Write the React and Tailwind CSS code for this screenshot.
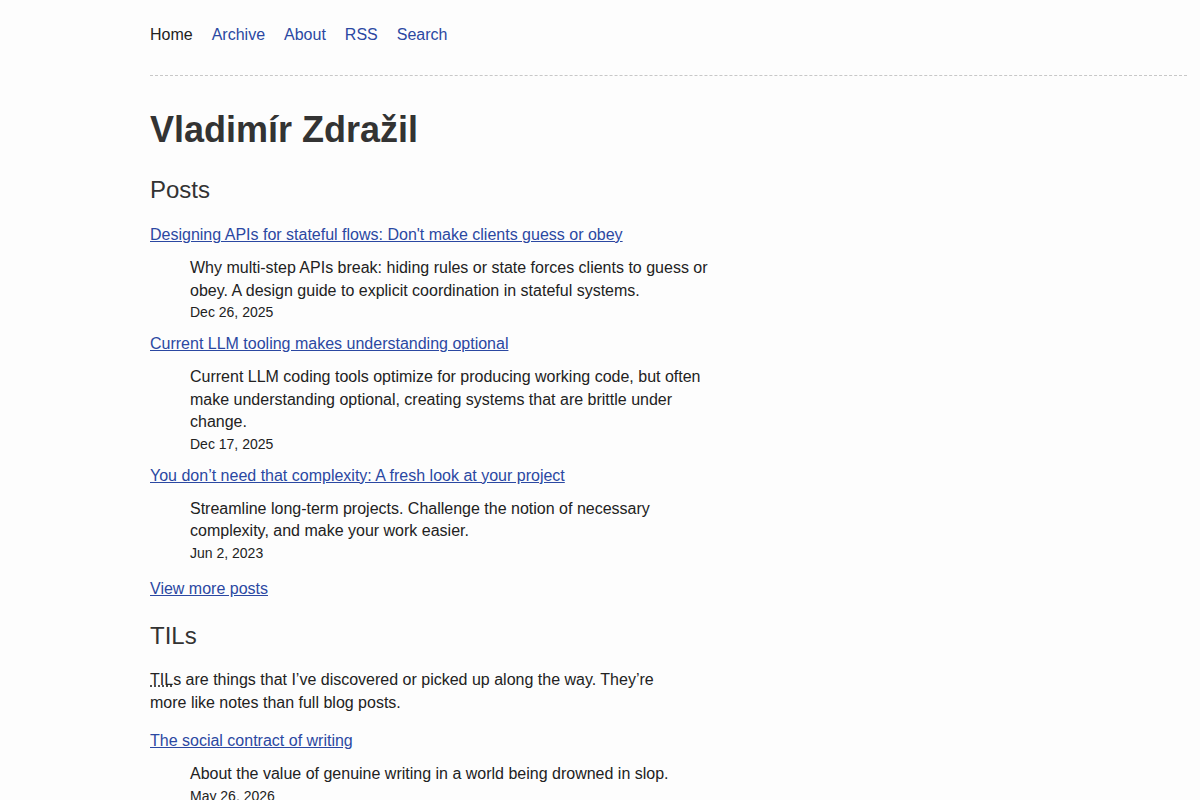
import React from "react";

const posts = [
  {
    title: "Designing APIs for stateful flows: Don't make clients guess or obey",
    desc: "Why multi-step APIs break: hiding rules or state forces clients to guess or obey. A design guide to explicit coordination in stateful systems.",
    date: "Dec 26, 2025",
  },
  {
    title: "Current LLM tooling makes understanding optional",
    desc: "Current LLM coding tools optimize for producing working code, but often make understanding optional, creating systems that are brittle under change.",
    date: "Dec 17, 2025",
  },
  {
    title: "You don\u2019t need that complexity: A fresh look at your project",
    desc: "Streamline long-term projects. Challenge the notion of necessary complexity, and make your work easier.",
    date: "Jun 2, 2023",
  },
];

const tils = [
  {
    title: "The social contract of writing",
    desc: "About the value of genuine writing in a world being drowned in slop.",
    date: "May 26, 2026",
  },
];

function Entry({ item, first }) {
  return (
    <li className={first ? "" : "mt-[10px]"}>
      <a href="#" className="text-[#2b48a2] underline text-[16px] leading-[24px]">
        {item.title}
      </a>
      <div className="pl-[40px] mt-[10px]">
        <p className="max-w-[530px] text-[16px] leading-[22.5px] text-[#222]">{item.desc}</p>
        <div className="text-[14px] leading-[20px] text-[#222]">{item.date}</div>
      </div>
    </li>
  );
}

export default function App() {
  return (
    <div
      className="min-h-[800px] bg-[#fdfdfd] text-[#222]"
      style={{ fontFamily: '"Liberation Sans", Arial, sans-serif' }}
    >
      <div className="ml-[150px] mr-[13px] pt-[23px]">
        <header className="border-b border-dashed border-[#c8c8c8] pb-[28px]">
          <nav className="flex gap-[19px] text-[16px] leading-[24px]">
            <a href="#" className="text-[#222]">Home</a>
            <a href="#" className="text-[#2b48a2]">Archive</a>
            <a href="#" className="text-[#2b48a2]">About</a>
            <a href="#" className="text-[#2b48a2]">RSS</a>
            <a href="#" className="text-[#2b48a2]">Search</a>
          </nav>
        </header>
        <main className="pt-[32px]">
          <h1 className="text-[36px] leading-[44px] font-bold text-[#333]">Vladimír Zdražil</h1>
          <h2 className="mt-[22px] text-[24px] leading-[32px] text-[#333]">Posts</h2>
          <ul className="mt-[17px]">
            {posts.map((p, i) => (
              <Entry key={i} item={p} first={i === 0} />
            ))}
          </ul>
          <div className="mt-[14.5px] leading-[24px]">
            <a href="#" className="text-[#2b48a2] underline text-[16px]">View more posts</a>
          </div>
          <h2 className="mt-[18.5px] text-[24px] leading-[32px] text-[#333]">TILs</h2>
          <p className="mt-[17.5px] max-w-[530px] text-[16px] leading-[22.5px]">
            <abbr title="Today I Learned">TIL</abbr>s are things that I’ve discovered or picked up along the way. They’re more like notes than full blog posts.
          </p>
          <ul className="mt-[15px] pb-[20px]">
            {tils.map((p, i) => (
              <Entry key={i} item={p} first={i === 0} />
            ))}
          </ul>
        </main>
      </div>
    </div>
  );
}
